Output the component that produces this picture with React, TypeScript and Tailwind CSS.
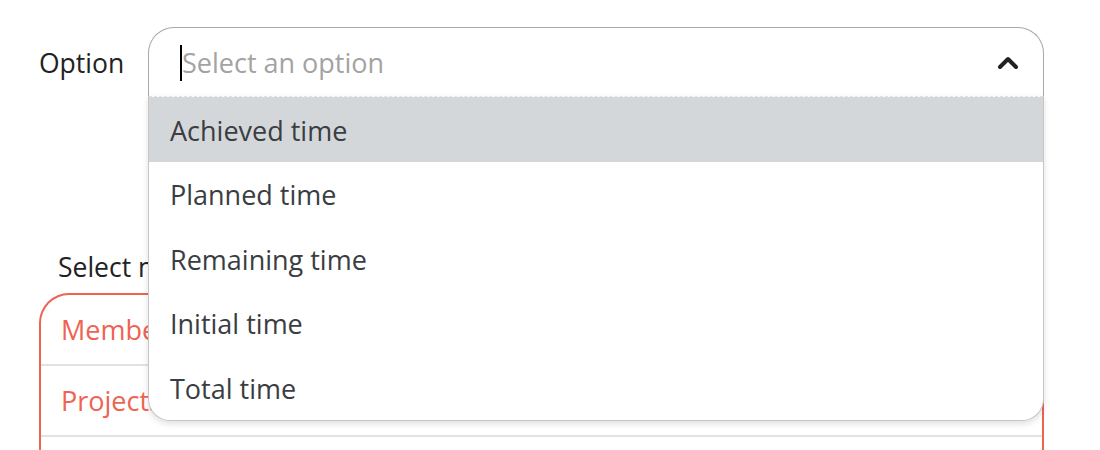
import { ChevronUp } from "lucide-react";

const OPTIONS = ["Achieved time", "Planned time", "Remaining time", "Initial time", "Total time"];
const METRICS = ["Members", "Projects", "Tasks"];

export default function App() {
  return (
    <div
      className="w-[1100px] h-[450px] overflow-hidden bg-white pl-[39px] pt-[27px]"
      style={{ fontFamily: "'Open Sans', 'Noto Sans', sans-serif" }}
    >
      <div className="w-[1005px]">
        {/* Option select */}
        <div className="flex items-center">
          <label className="w-[109px] pt-[3px] text-[26.5px] text-[#222]">Option</label>
          <div className="relative flex-1">
            <div className="flex items-center h-[70px] rounded-t-[26px] border border-b-0 border-[#a8a8a8] pl-[31px] pr-[19px]">
              <span className="w-[2px] h-[36px] bg-black" />
              <span className="flex-1 pt-[2px] text-[27px] text-[#a3a3a3]">Select an option</span>
              <ChevronUp size={32} strokeWidth={3} className="text-[#222]" />
            </div>

            {/* Open menu */}
            <ul className="absolute left-0 right-0 top-[69px] z-10 bg-white border border-t-0 border-[#c6c6c6] rounded-b-[22px] overflow-hidden shadow-[0_3px_6px_rgba(0,0,0,0.12)]">
              <div className="h-px border-t border-dashed border-[#e2e2e2]" />
              {OPTIONS.map((opt, i) => (
                <li
                  key={opt}
                  className={`h-[64.5px] flex items-center pl-[21px] pt-[3px] text-[27px] text-[#3a3d42] ${i === 0 ? "bg-[#d4d7da]" : ""}`}
                >
                  {opt}
                </li>
              ))}
            </ul>
          </div>
        </div>

        {/* Metric list */}
        <div className="mt-[151px] pl-[19px] text-[26.5px] text-[#222]">Select metrics</div>
        <div className="mt-[5px] border-[2px] border-b-0 border-[#ee6352] rounded-t-[30px] h-[200px]">
          {METRICS.map((m) => (
            <div key={m} className="h-[71px] flex items-center pl-[20px] pt-[2px] border-b-2 border-[#e2e2e2] text-[27px] text-[#ee6352]">
              {m}
            </div>
          ))}
        </div>
      </div>
    </div>
  );
}
